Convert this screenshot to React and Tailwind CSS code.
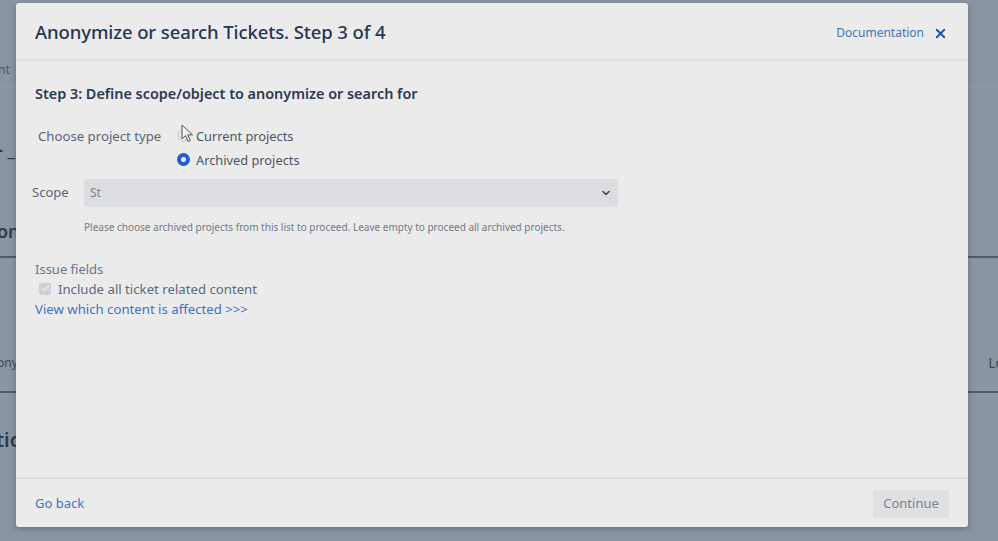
import { X, ChevronDown, Check } from "lucide-react";

const font = { fontFamily: '"Noto Sans", "Open Sans", sans-serif' };

const Backdrop = () => (
  <div className="flex h-[541px] w-[998px] flex-col bg-[#8b94a2] text-[#3c4657]">
    <div className="h-[58px]" />
    <div className="flex h-[24px] items-center border-b border-[#858e9c] text-[12px] text-[#4f5a6b]">
      <span className="-ml-[2px]">nt</span>
    </div>
    <div className="flex h-[134px] items-center text-[18px] font-bold text-[#2f3a4c]">
      <span className="-ml-[3px]">- _</span>
    </div>
    <div className="flex h-[30px] items-center text-[18px] font-semibold text-[#2f3a4c]">
      <span className="-ml-[3px]">on</span>
    </div>
    <div className="h-[10px]" />
    <div className="flex h-[135px] items-start justify-between border-t-2 border-[#505a6a] pt-[96px] text-[12px] leading-[18px]">
      <span className="-ml-[3px]">ony</span>
      <span className="mr-[-6px] text-[14px]">Lo</span>
    </div>
    <div className="flex flex-1 items-start border-t-2 border-[#505a6a] pt-[34px] text-[20px] font-semibold leading-[26px] text-[#2f3a4c]">
      <span className="-ml-[4px]">tic</span>
    </div>
  </div>
);

const Radio = ({ checked }) =>
  checked ? (
    <span className="flex h-[13px] w-[13px] items-center justify-center rounded-full bg-[#1d5fd1]">
      <span className="h-[5px] w-[5px] rounded-full bg-white" />
    </span>
  ) : (
    <span className="h-[13px] w-[13px] rounded-full border border-[#c8ccd2] bg-[#e4e5e7]" />
  );

const Cursor = () => (
  <svg width="13" height="19" viewBox="0 0 13 19" className="absolute left-[4px] top-[-2px]">
    <path d="M1 1 L1 15 L4.5 11.5 L7 17.5 L9.3 16.5 L6.8 10.8 L11.5 10.8 Z" fill="#f4f4f4" stroke="#555" strokeWidth="1" strokeLinejoin="round" />
  </svg>
);

export default function App() {
  return (
    <div className="relative h-[541px] w-[998px] overflow-hidden" style={font}>
      <Backdrop />
      <div className="absolute left-[16px] top-[3px] flex h-[524px] w-[952px] flex-col rounded-[3px] bg-[#ebebeb] shadow-[0_2px_6px_rgba(40,50,70,0.35)]">
        <div className="flex h-[58px] items-center justify-between border-b-2 border-[#dedede] pl-[19px] pr-[20px]">
          <h1 className="mt-[2px] text-[18.5px] font-medium tracking-[-0.1px] text-[#263650]">
            Anonymize or search Tickets. Step 3 of 4
          </h1>
          <div className="mt-[4px] flex items-center gap-[9px]">
            <span className="text-[12px] text-[#4472c0]">Documentation</span>
            <X size={15} strokeWidth={3} className="text-[#2453a4]" />
          </div>
        </div>

        <div className="flex flex-1 flex-col px-[19px] pt-[22px]">
          <h2 className="text-[14.4px] font-semibold text-[#2c3a52]">
            Step 3: Define scope/object to anonymize or search for
          </h2>

          <div className="mt-[21px] flex items-start">
            <span className="ml-[3px] w-[139px] text-[13.2px] leading-[20px] text-[#5b6577]">
              Choose project type
            </span>
            <div className="flex flex-col gap-[4px] text-[12.8px] leading-[20px] text-[#4b5567]">
              <div className="relative flex items-center gap-[6px]">
                <Radio />
                <Cursor />
                <span>Current projects</span>
              </div>
              <div className="flex items-center gap-[6px]">
                <Radio checked />
                <span>Archived projects</span>
              </div>
            </div>
          </div>

          <div className="mt-[9px] flex items-center">
            <span className="-ml-[3px] w-[52px] text-[13px] text-[#5b6577]">Scope</span>
            <div className="flex h-[28px] w-[534px] items-center justify-between rounded-[3px] bg-[#dcdde0] pl-[6px] pr-[6px]">
              <span className="text-[12px] text-[#7b8290]">St</span>
              <ChevronDown size={12} strokeWidth={3} className="text-[#3a4250]" />
            </div>
          </div>

          <p className="ml-[49px] mt-[13px] text-[10px] text-[#707a8a]">
            Please choose archived projects from this list to proceed. Leave empty to proceed all archived projects.
          </p>

          <div className="mt-[24px] text-[13px] leading-[20px] text-[#6b7586]">Issue fields</div>
          <div className="flex items-center gap-[7px] pl-[4px] text-[13.2px] leading-[20px] text-[#5f6979]">
            <span className="flex h-[12px] w-[12px] items-center justify-center rounded-[2px] bg-[#cfd1d4]">
              <Check size={9} strokeWidth={3.5} className="text-[#eeeeee]" />
            </span>
            <span>Include all ticket related content</span>
          </div>
          <div className="text-[13.2px] leading-[20px] text-[#3f72c6]">View which content is affected &gt;&gt;&gt;</div>
        </div>

        <div className="flex h-[50px] items-center justify-between border-t-2 border-[#dedede] pl-[19px] pr-[19px]">
          <span className="mt-[2px] text-[13px] text-[#4472c0]">Go back</span>
          <button className="mt-[1px] h-[28px] w-[76px] rounded-[3px] bg-[#dfe0e2] text-[13px] text-[#7a8290]">
            Continue
          </button>
        </div>
      </div>
    </div>
  );
}
